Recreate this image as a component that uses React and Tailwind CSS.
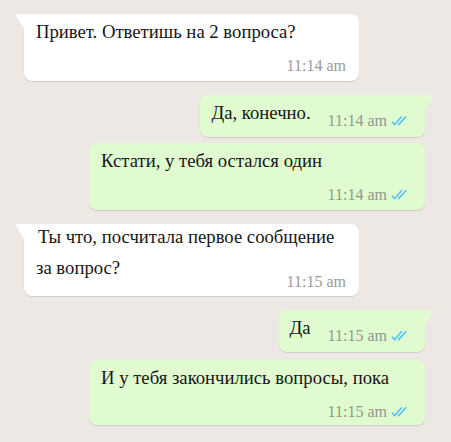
import React from "react";

// Double tick shown on delivered / read outgoing messages
function ReadTicks() {
  return (
    <svg width="19" height="12" viewBox="0 0 19 12" className="ml-[4px] shrink-0">
      <path d="M1.5 7.2 L3.8 9.6 L10.5 1.8" fill="none" stroke="#4fc3f7" strokeWidth="1.6" strokeLinecap="round" strokeLinejoin="round" />
      <path d="M7.6 9.6 L14.8 1.8" fill="none" stroke="#4fc3f7" strokeWidth="1.6" strokeLinecap="round" />
    </svg>
  );
}

function Tail({ out }) {
  return out ? (
    <svg width="10" height="16" viewBox="0 0 10 16" className="absolute top-0 -right-[9px]">
      <path d="M0 0 H8.5 Q10 0 9.2 1.4 L0 16 Z" fill="#e1fbd0" />
    </svg>
  ) : (
    <svg width="10" height="16" viewBox="0 0 10 16" className="absolute top-0 -left-[9px]">
      <path d="M10 0 H1.5 Q0 0 0.8 1.4 L10 16 Z" fill="#ffffff" />
    </svg>
  );
}

function Time({ value, out }) {
  return (
    <div className={`flex items-center text-[16px] leading-[20px] whitespace-nowrap ${out ? "text-[#8d9a88]" : "text-[#9a9a9a]"}`}>
      <span>{value}</span>
      {out && <ReadTicks />}
    </div>
  );
}

function Bubble({ out, tail, className, children }) {
  const shape = out
    ? `bg-[#e1fbd0] ${tail ? "rounded-lg rounded-tr-none" : "rounded-lg"}`
    : `bg-white ${tail ? "rounded-lg rounded-tl-none" : "rounded-lg"}`;
  return (
    <div className={`relative shadow-[0_1px_1px_rgba(0,0,0,0.13)] ${shape} ${className}`}>
      {tail && <Tail out={out} />}
      {children}
    </div>
  );
}

// Short message: text and time on one row
function InlineMessage({ out, tail, text, time, className }) {
  return (
    <Bubble out={out} tail={tail} className={`flex h-[42px] pl-[11px] pr-[15px] ${className}`}>
      <div className="pt-[4px] leading-[28px]">{text}</div>
      <div className="ml-[17px] mt-[16px]">
        <Time value={time} out={out} />
      </div>
    </Bubble>
  );
}

// Longer message: text on top, time on its own row below
function BlockMessage({ out, tail, text, time, className }) {
  return (
    <Bubble out={out} tail={tail} className={`pl-3 pt-[4px] pb-[5px] ${out ? "w-[336px] pr-[15px]" : "w-[335px] pr-[13px]"} ${className}`}>
      <div className="leading-[28px]">{text}</div>
      <div className="mt-[10px] flex justify-end">
        <Time value={time} out={out} />
      </div>
    </Bubble>
  );
}

export default function App() {
  return (
    <div className="h-[442px] overflow-hidden bg-[#ede8e3] pt-[14px] pl-[24px] pr-[26px] font-['Liberation_Serif',serif] text-[18.7px] text-[#161616]">
      <div className="flex flex-col">
        <BlockMessage tail text="Привет. Ответишь на 2 вопроса?" time="11:14 am" className="self-start" />

        <InlineMessage out tail text="Да, конечно." time="11:14 am" className="self-end mt-[14px]" />
        <BlockMessage out text="Кстати, у тебя остался один" time="11:14 am" className="self-end mt-[6px] h-[67px]" />

        <Bubble tail className="self-start mt-[14px] w-[335px] pl-3 pr-[13px] pb-[4px]">
          <div className="leading-[26px] indent-[2px]">Ты что, посчитала первое сообщение</div>
          <div className="mt-[5px] flex items-start justify-between">
            <div className="leading-[26px]">за вопрос?</div>
            <div className="mt-[17px]">
              <Time value="11:15 am" />
            </div>
          </div>
        </Bubble>

        <InlineMessage out tail text="Да" time="11:15 am" className="self-end mt-[14px]" />
        <BlockMessage out text="И у тебя закончились вопросы, пока" time="11:15 am" className="self-end mt-[8px] h-[65px]" />
      </div>
    </div>
  );
}
